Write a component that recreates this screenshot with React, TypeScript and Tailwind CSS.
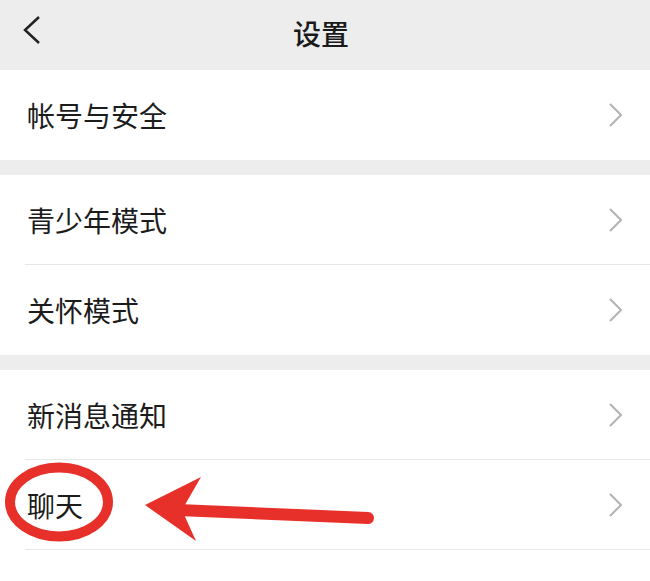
const font = { fontFamily: '"Noto Sans CJK SC", "Noto Sans", sans-serif' };

function Chevron() {
  return (
    <svg width="14" height="24" viewBox="0 0 14 24" fill="none" className="shrink-0">
      <polyline points="2,1 13,12 2,23" stroke="#b3b3b3" strokeWidth="2" strokeLinejoin="miter" />
    </svg>
  );
}

function Row({ label, divider }: { label: string; divider?: boolean }) {
  return (
    <div className="bg-white pl-[25px]">
      <div
        className={`h-[90px] flex items-center justify-between pr-[28px] ${
          divider ? "border-b border-[#e6e6e6]" : ""
        }`}
      >
        <span className="ml-[2px] text-[28px] text-[#1c1c1c] leading-none">{label}</span>
        <Chevron />
      </div>
    </div>
  );
}

export default function App() {
  return (
    <div className="relative w-[650px] h-[581px] overflow-hidden bg-white" style={font}>
      <div className="h-[70px] bg-[#ededed] flex items-center justify-center relative">
        <svg
          width="20"
          height="30"
          viewBox="0 0 20 30"
          fill="none"
          className="absolute left-[22px] top-[15px]"
        >
          <polyline points="17,2 3,15 17,28" stroke="#222" strokeWidth="2.5" />
        </svg>
        <span className="text-[28px] font-medium text-[#1a1a1a] leading-none -mt-[5px] mr-[8px]">设置</span>
      </div>

      <Row label="帐号与安全" />
      <div className="h-[15px] bg-[#ededed]" />
      <Row label="青少年模式" divider />
      <Row label="关怀模式" />
      <div className="h-[15px] bg-[#ededed]" />
      <Row label="新消息通知" divider />
      <Row label="聊天" divider />
      <div className="h-[31px] bg-white" />

      <svg
        width="650"
        height="581"
        viewBox="0 0 650 581"
        className="absolute inset-0 pointer-events-none"
      >
        <ellipse cx="59" cy="502" rx="49" ry="34.5" fill="none" stroke="#e8302a" strokeWidth="10" />
        <line x1="178" y1="510" x2="368" y2="518" stroke="#e8302a" strokeWidth="12" strokeLinecap="round" />
        <polygon points="145,505 201,477 182,510 196,541" fill="#e8302a" />
      </svg>
    </div>
  );
}
